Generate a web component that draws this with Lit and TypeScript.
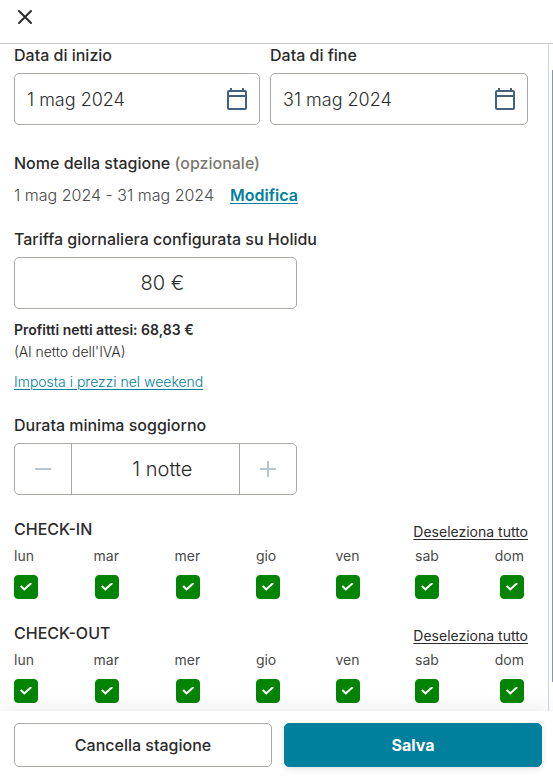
import { LitElement, html, css, svg } from "lit";
import { customElement, property, state } from "lit/decorators.js";

const DAYS = ["lun", "mar", "mer", "gio", "ven", "sab", "dom"];

const calendarIcon = svg`<svg width="20" height="22" viewBox="0 0 20 22" fill="none" stroke="currentColor" stroke-width="2" aria-hidden="true">
  <rect x="1" y="3" width="18" height="18" rx="1"></rect>
  <path d="M1 8H19M4 0V3M16 0V3"></path>
</svg>`;

@customElement("day-picker")
export class DayPicker extends LitElement {
  static styles = css`
    :host {
      display: block;
    }
    .group {
      margin: 0;
      padding: 0;
      border: 0;
      min-width: 0;
    }
    .head {
      display: flex;
      justify-content: space-between;
      align-items: flex-end;
      margin-bottom: 4px;
    }
    .title {
      margin: 0;
      font-size: 16px;
      line-height: 24px;
      font-weight: 500;
    }
    .toggle {
      padding: 0;
      border: 0;
      background: none;
      color: inherit;
      font: inherit;
      font-size: 14px;
      font-weight: 400;
      line-height: 18px;
      text-decoration: underline;
      text-underline-offset: 2px;
      cursor: pointer;
    }
    .days {
      display: flex;
      justify-content: space-between;
      padding-right: 4px;
    }
    .day {
      display: flex;
      flex-direction: column;
      gap: 8px;
      font-size: 14px;
      font-weight: 400;
      line-height: 22px;
      color: #4a4a4a;
    }
    .box {
      appearance: none;
      display: grid;
      place-items: center;
      align-self: flex-end;
      width: 24px;
      height: 24px;
      margin: 0;
      border: 1px solid #aba8a4;
      border-radius: 4px;
      background: #fff;
      cursor: pointer;
    }
    .box:checked {
      border-color: #048404;
      background: #048404;
    }
    .box:checked::before {
      content: "";
      width: 12px;
      height: 9px;
      background: #fff;
      clip-path: polygon(0 46%, 13% 31%, 36% 60%, 87% 0, 100% 14%, 36% 92%);
    }
  `;

  @property() heading = "";
  @state() private selected = DAYS.map(() => true);

  private toggleAll() {
    const all = this.selected.every(Boolean);
    this.selected = DAYS.map(() => !all);
  }

  private toggle(i: number) {
    this.selected = this.selected.map((v, n) => (n === i ? !v : v));
  }

  render() {
    return html`<section class="group" role="group" aria-labelledby="title">
      <div class="head">
        <h3 class="title" id="title">${this.heading}</h3>
        <button class="toggle" type="button" @click=${this.toggleAll}>
          ${this.selected.every(Boolean) ? "Deseleziona tutto" : "Seleziona tutto"}
        </button>
      </div>
      <div class="days">
        ${DAYS.map(
          (d, i) => html`<label class="day"
            >${d}<input class="box" type="checkbox" .checked=${this.selected[i]} @change=${() => this.toggle(i)}
          /></label>`
        )}
      </div>
    </section>`;
  }
}

@customElement("app-root")
export class AppRoot extends LitElement {
  static styles = css`
    :host {
      display: flex;
      flex-direction: column;
      height: 100vh;
      background: #fff;
      color: #2b2b2b;
      font-family: Inter, "Liberation Sans", sans-serif;
      font-size: 16px;
      line-height: 24px;
      font-weight: 300;
    }
    * {
      box-sizing: border-box;
    }
    .header {
      flex: none;
      height: 43px;
      padding: 9px 17px;
      box-shadow: 0 1px 0 #c9c9c9;
    }
    .close {
      display: grid;
      place-items: center;
      width: 16px;
      height: 16px;
      padding: 0;
      border: 0;
      background: none;
      color: #2b2b2b;
      cursor: pointer;
    }
    .body {
      flex: 1;
      min-height: 0;
      display: flex;
      overflow: hidden;
    }
    .form {
      flex: 1;
      min-width: 0;
      padding: 0 20px 0 14px;
    }
    .rail {
      flex: none;
      display: flex;
      justify-content: flex-end;
      width: 5px;
      margin-top: 1px;
      padding: 26px 0 29px;
      border-left: 1px solid #cbd5e1;
    }
    .thumb {
      width: 1px;
      background: #8497aa;
    }
    .label {
      display: block;
      margin-bottom: 6px;
      font-weight: 500;
    }
    .dates {
      display: grid;
      grid-template-columns: 246fr 258fr;
      gap: 10px;
      margin-bottom: 26px;
    }
    .control {
      display: flex;
      align-items: center;
      height: 52px;
      border: 1px solid #aba8a4;
      border-radius: 5px;
      overflow: hidden;
    }
    .input {
      flex: 1;
      min-width: 0;
      width: 100%;
      height: 100%;
      padding: 0 12px;
      border: 0;
      outline: 0;
      background: none;
      color: inherit;
      font: inherit;
      font-size: 18px;
    }
    .centered {
      padding: 0 0 0 14px;
      font-size: 20px;
      text-align: center;
    }
    .calendar {
      display: flex;
      padding: 0 12px;
      border: 0;
      background: none;
      color: #43607c;
      cursor: pointer;
    }
    .heading {
      margin: 0 0 8px;
      font-size: 16px;
      font-weight: 500;
    }
    .optional {
      color: #7d7870;
    }
    .season {
      display: flex;
      gap: 16px;
      margin: 0 0 20px;
      color: #4a4a4a;
    }
    .link {
      color: #00809d;
      text-underline-offset: 2px;
    }
    .strong {
      font-weight: 600;
    }
    .narrow {
      width: 55%;
    }
    .notes {
      margin: 10px 0 20px;
      font-size: 14px;
      line-height: 22px;
    }
    .note {
      margin: 0;
    }
    .profit {
      font-weight: 600;
    }
    .weekend {
      margin: 8px 0 0;
    }
    .step {
      flex: none;
      display: grid;
      place-items: center;
      width: 57px;
      height: 100%;
      padding: 0;
      border: 0 solid #aba8a4;
      background: none;
      color: #b9c4d1;
      cursor: pointer;
    }
    .less {
      border-right-width: 1px;
    }
    .more {
      border-left-width: 1px;
    }
    .picker {
      margin-top: 22px;
    }
    .footer {
      flex: none;
      position: relative;
      display: grid;
      grid-template-columns: 1fr 1fr;
      gap: 12px;
      padding: 12px 11px 9px 14px;
      background: #fff;
      box-shadow: 0 0 20px rgba(0, 0, 0, 0.1);
    }
    .button {
      height: 44px;
      border: 1px solid #aba8a4;
      border-radius: 5px;
      background: #fff;
      color: #2b2b2b;
      font: inherit;
      font-weight: 500;
      cursor: pointer;
    }
    .primary {
      border-color: #00809d;
      background: #00809d;
      color: #fff;
      font-weight: 700;
      box-shadow: 0 2px 6px rgba(0, 0, 0, 0.12);
    }
  `;

  @state() private nights = 1;

  private changeNights(by: number) {
    this.nights = Math.max(1, this.nights + by);
  }

  private dateField(id: string, label: string, value: string) {
    return html`<div>
      <label class="label" for=${id}>${label}</label>
      <div class="control">
        <input class="input" id=${id} type="text" .value=${value} />
        <button class="calendar" type="button" aria-label="Apri calendario">${calendarIcon}</button>
      </div>
    </div>`;
  }

  render() {
    return html`
      <header class="header">
        <button class="close" type="button" aria-label="Chiudi">
          <svg width="16" height="16" viewBox="0 0 16 16" fill="none" stroke="currentColor" stroke-width="2" stroke-linecap="round">
            <path d="M2 2L14 14M14 2L2 14"></path>
          </svg>
        </button>
      </header>
      <main class="body">
        <form class="form">
          <div class="dates">
            ${this.dateField("start", "Data di inizio", "1 mag 2024")}
            ${this.dateField("end", "Data di fine", "31 mag 2024")}
          </div>

          <h2 class="heading">Nome della stagione <span class="optional">(opzionale)</span></h2>
          <p class="season">
            <span>1 mag 2024 - 31 mag 2024</span>
            <a class="link strong" href="#name">Modifica</a>
          </p>

          <label class="label" for="rate">Tariffa giornaliera configurata su Holidu</label>
          <div class="control narrow">
            <input class="input centered" id="rate" type="text" value="80 €" />
          </div>
          <div class="notes">
            <p class="note profit">Profitti netti attesi: 68,83 €</p>
            <p class="note">(Al netto dell'IVA)</p>
            <p class="weekend"><a class="link" href="#weekend">Imposta i prezzi nel weekend</a></p>
          </div>

          <label class="label" for="nights">Durata minima soggiorno</label>
          <div class="control narrow">
            <button class="step less" type="button" aria-label="Meno notti" @click=${() => this.changeNights(-1)}>
              <svg width="16" height="16" viewBox="0 0 16 16" stroke="currentColor" stroke-width="2"><path d="M0 8H16"></path></svg>
            </button>
            <input
              class="input centered"
              id="nights"
              type="text"
              readonly
              .value=${`${this.nights} ${this.nights === 1 ? "notte" : "notti"}`}
            />
            <button class="step more" type="button" aria-label="Più notti" @click=${() => this.changeNights(1)}>
              <svg width="16" height="16" viewBox="0 0 16 16" stroke="currentColor" stroke-width="2"><path d="M0 8H16M8 0V16"></path></svg>
            </button>
          </div>

          <day-picker class="picker" heading="CHECK-IN"></day-picker>
          <day-picker class="picker" heading="CHECK-OUT"></day-picker>
        </form>
        <div class="rail"><div class="thumb"></div></div>
      </main>
      <footer class="footer">
        <button class="button" type="button">Cancella stagione</button>
        <button class="button primary" type="button">Salva</button>
      </footer>
    `;
  }
}
